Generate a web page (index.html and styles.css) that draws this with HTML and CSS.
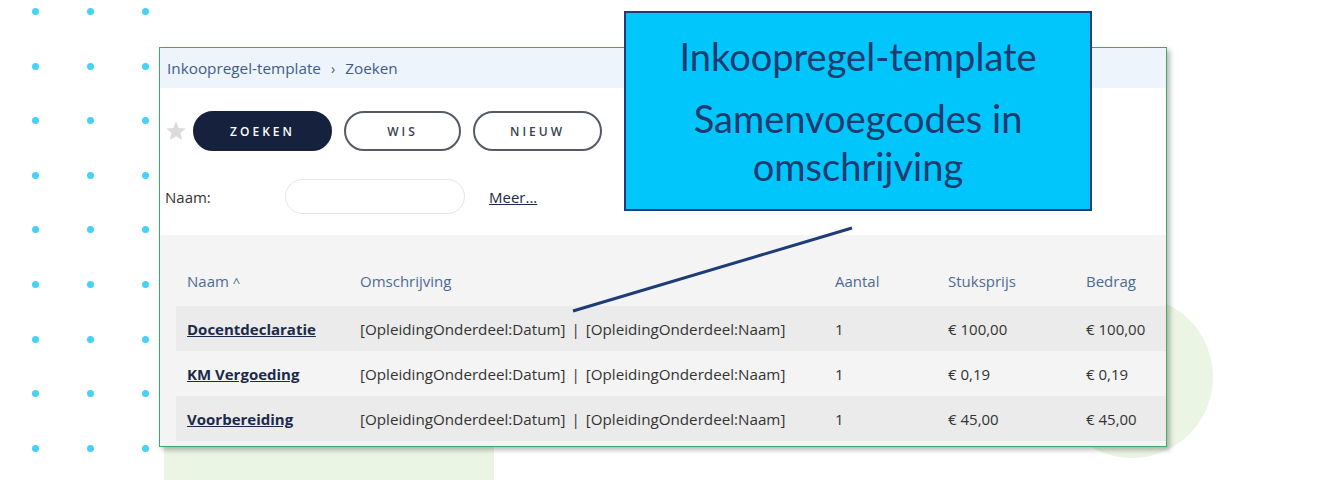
FILE: index.html
```html
<!DOCTYPE html>
<html lang="nl">
<head>
    <meta charset="UTF-8">
    <title>Inkoopregel-template</title>
    <link rel="stylesheet" href="styles.css">
</head>
<body>

    <div class="stage">

        <!-- decoratie op de achtergrond -->
        <div class="dots">
            <i></i><i></i><i></i><i></i><i></i><i></i><i></i><i></i><i></i>
            <i></i><i></i><i></i><i></i><i></i><i></i><i></i><i></i><i></i>
            <i></i><i></i><i></i><i></i><i></i><i></i><i></i><i></i><i></i>
        </div>
        <div class="blob blob-left"></div>
        <div class="blob blob-right"></div>

        <!-- schermafdruk van de zoekpagina -->
        <div class="window">
            <div class="breadcrumb">
                <span>Inkoopregel-template</span>
                <span class="crumb-sep">›</span>
                <span>Zoeken</span>
            </div>

            <div class="toolbar">
                <svg class="star" width="22" height="22" viewBox="0 0 24 24">
                    <path d="M12 1.5l3.1 7.1 7.6.6-5.8 5 1.8 7.5L12 17.7l-6.7 4 1.8-7.5-5.8-5 7.6-.6z" fill="#dcdcdc"/>
                </svg>
                <button class="btn btn-primary btn-zoeken">ZOEKEN</button>
                <button class="btn btn-wis">WIS</button>
                <button class="btn btn-nieuw">NIEUW</button>
            </div>

            <div class="search-row">
                <label class="search-label">Naam:</label>
                <input class="search-input" type="text">
                <a class="more-link" href="#">Meer...</a>
            </div>

            <div class="results">
                <table class="grid">
                    <colgroup>
                        <col style="width:173px">
                        <col style="width:475px">
                        <col style="width:113px">
                        <col style="width:138px">
                        <col>
                    </colgroup>
                    <thead>
                        <tr>
                            <th>Naam <span class="sort">^</span></th>
                            <th>Omschrijving</th>
                            <th>Aantal</th>
                            <th>Stuksprijs</th>
                            <th>Bedrag</th>
                        </tr>
                    </thead>
                    <tbody>
                        <tr>
                            <td><a class="row-link" href="#">Docentdeclaratie</a></td>
                            <td class="desc">[OpleidingOnderdeel:Datum] | [OpleidingOnderdeel:Naam]</td>
                            <td>1</td>
                            <td>€ 100,00</td>
                            <td>€ 100,00</td>
                        </tr>
                        <tr>
                            <td><a class="row-link" href="#">KM Vergoeding</a></td>
                            <td class="desc">[OpleidingOnderdeel:Datum] | [OpleidingOnderdeel:Naam]</td>
                            <td>1</td>
                            <td>€ 0,19</td>
                            <td>€ 0,19</td>
                        </tr>
                        <tr>
                            <td><a class="row-link" href="#">Voorbereiding</a></td>
                            <td class="desc">[OpleidingOnderdeel:Datum] | [OpleidingOnderdeel:Naam]</td>
                            <td>1</td>
                            <td>€ 45,00</td>
                            <td>€ 45,00</td>
                        </tr>
                    </tbody>
                </table>
            </div>
        </div>

        <!-- toelichting met verbindingslijn -->
        <svg class="connector" width="1327" height="480">
            <line x1="852" y1="228" x2="573" y2="311" stroke="#1f3c78" stroke-width="3"/>
        </svg>
        <div class="callout">
            <p class="callout-title">Inkoopregel-template</p>
            <p class="callout-text">Samenvoegcodes in<br>omschrijving</p>
        </div>

    </div>

</body>
</html>
```

FILE: styles.css
```css
:root {
    --navy: #16213d;
    --link: #1c2a4a;
    --head: #4d6b95;
    --text: #333;
}

body {
    margin: 0;
    background-color: #fff;
    font-family: "Open Sans", "Noto Sans", sans-serif;
    color: var(--text);
}

.stage {
    position: relative;
    width: 1327px;
    height: 480px;
    overflow: hidden;
}

/* stippenraster links */
.dots {
    position: absolute;
    left: 32px;
    top: 8px;
    display: grid;
    grid-template-columns: repeat(3, 7px);
    column-gap: 48px;
    row-gap: 47.6px;
}

.dots i {
    width: 7px;
    height: 7px;
    border-radius: 50%;
    background-color: #45d2f6;
}

.blob {
    position: absolute;
    background-color: #ebf5e3;
}

.blob-left {
    left: 164px;
    top: 400px;
    width: 330px;
    height: 120px;
}

.blob-right {
    left: 1051px;
    top: 296px;
    width: 162px;
    height: 162px;
    border-radius: 50%;
}

/* venster */
.window {
    position: absolute;
    left: 159px;
    top: 47px;
    width: 1008px;
    height: 400px;
    box-sizing: border-box;
    border: 1px solid #3daa6b;
    background-color: #fff;
    box-shadow: 3px 3px 5px rgba(0,0,0,0.28);
    display: flex;
    flex-direction: column;
}

.breadcrumb {
    height: 40px;
    background-color: #eef4fb;
    display: flex;
    align-items: center;
    gap: 10px;
    padding-left: 7px;
    font-size: 15.3px;
    color: #3f5d8c;
}

.crumb-sep {
    font-size: 14px;
    color: #556;
}

.toolbar {
    display: flex;
    align-items: center;
    margin-top: 23px;
    padding-left: 5px;
}

.star {
    margin-right: 6px;
}

.btn {
    height: 40px;
    border-radius: 20px;
    border: 2px solid #555a66;
    background-color: #fff;
    font-family: "Open Sans", sans-serif;
    font-size: 12px;
    font-weight: 600;
    letter-spacing: 3px;
    color: #3c4150;
    padding: 0;
    margin-right: 12px;
}

.btn-primary {
    background-color: var(--navy);
    border-color: var(--navy);
    color: #fff;
}

.btn-zoeken { width: 139px; }
.btn-wis    { width: 117px; }
.btn-nieuw  { width: 129px; }

.search-row {
    display: flex;
    align-items: center;
    margin-top: 28px;
    padding-left: 5px;
    font-size: 15px;
}

.search-label {
    width: 120px;
}

.search-input {
    width: 180px;
    height: 35px;
    box-sizing: border-box;
    border: 1px solid #e6e6e6;
    border-radius: 18px;
    margin-right: 24px;
}

.more-link {
    color: var(--link);
}

/* resultaten */
.results {
    flex: 1;
    margin-top: 21px;
    background-color: #f4f4f4;
    padding: 21px 0 0 16px;
}

.grid {
    width: 100%;
    border-collapse: collapse;
    table-layout: fixed;
    font-size: 15px;
}

.grid th {
    height: 50px;
    padding: 0 0 0 11px;
    text-align: left;
    font-weight: 400;
    color: var(--head);
}

.grid td {
    height: 45px;
    padding: 0 0 0 11px;
    white-space: nowrap;
}

.grid td.desc {
    font-size: 15.2px;
    word-spacing: 2px;
}

.grid tbody tr:nth-child(odd) {
    background-color: #ebebeb;
}

.sort {
    font-size: 13px;
}

.row-link {
    color: var(--link);
    font-weight: 700;
}

/* toelichting */
.connector {
    position: absolute;
    left: 0;
    top: 0;
}

.callout {
    position: absolute;
    left: 624px;
    top: 11px;
    width: 468px;
    height: 200px;
    box-sizing: border-box;
    border: 2px solid #1f3c78;
    background-color: #00c6fb;
    text-align: center;
    color: #1f3a6e;
    font-family: Lato, "Open Sans", sans-serif;
    font-size: 38px;
    padding-top: 19px;
}

.callout p {
    margin: 0;
    line-height: 48px;
}

.callout-text {
    margin-top: 14px !important;
}
```
